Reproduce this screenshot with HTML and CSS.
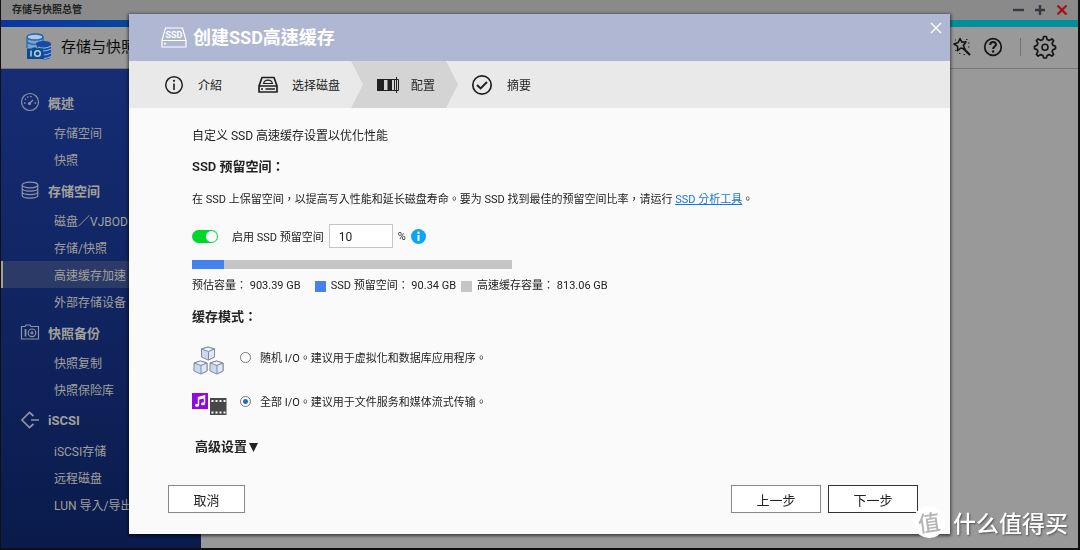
FILE: index.html
```html
<!DOCTYPE html>
<html lang="zh-TW">
<head>
<meta charset="utf-8">
<meta name="viewport" content="width=device-width, initial-scale=1">
<title>存储与快照总管</title>
<link rel="stylesheet" href="styles.css">
</head>
<body>
<div class="window">
  <div class="titlebar">
    <span class="titlebar-name">存储与快照总管</span>
    <div class="titlebar-buttons">
      <button type="button" aria-label="最小化"><svg width="12" height="12" viewBox="0 0 12 12"><path d="M1 6h11" stroke="#343a42" stroke-width="2.4"/></svg></button>
      <button type="button" aria-label="最大化"><svg width="12" height="12" viewBox="0 0 12 12"><path d="M1 6h10M6 1v10" stroke="#343a42" stroke-width="2.4"/></svg></button>
      <button type="button" aria-label="关闭"><svg width="12" height="12" viewBox="0 0 12 12"><path d="M1.500 1.500l9 9M10.500 1.500l-9 9" stroke="#a01218" stroke-width="2.2"/></svg></button>
    </div>
  </div>
  <div class="stripe"></div>
  <header class="app-header">
    <svg width="26" height="28" viewBox="0 0 26 28">
      <path d="M1 4v11c0 2 16 2 16 0V4" fill="#78a3cc"/>
      <ellipse cx="9" cy="4" rx="8" ry="3" fill="#b2cbe0" stroke="#1f66ae" stroke-width="1.3"/>
      <path d="M1 4v11M17 4v5M1 9c2 2 7 3 11 2" fill="none" stroke="#1f66ae" stroke-width="1.2"/>
      <path d="M10 11c0-4 15-4 15 0v12c0 3-5 4-9 3z" fill="#174aa5"/>
      <path d="M12 14c4 2 10 1 13-1M17 18c3 0 6-1 8-2M18 22c3 0 5-1 7-2M18 25.500c3 0 5-1 7-2" fill="none" stroke="#8cb0da" stroke-width="1.2"/>
      <path d="M1 15.500h5l1-1h3l1 1h6V26H1z" fill="#084c91"/>
      <circle cx="11.500" cy="20.500" r="2.800" fill="none" stroke="#bdcbd8" stroke-width="1.600"/><path d="M5 17.500v6" stroke="#bdcbd8" stroke-width="1.500"/>
    </svg>
    <h1 class="app-title">存储与快照总管</h1>
    <div class="app-tools">
      <button type="button" aria-label="向导"><svg width="20" height="20" viewBox="0 0 20 20"><path d="M8 1.500l2 3.800 4-.6-2.600 3.800 1.600 3.700-4.100-1.200-3.300 2.700V9.400L2 7l4.200-1.500z" fill="none" stroke="#151515" stroke-width="1.600" stroke-linejoin="round"/><path d="M11.500 11.500l6.500 6.500" stroke="#151515" stroke-width="2.200"/><path d="M14 2.500h1.500M16 6h1.500M16 10h1.500M3 13.500h1.500M7 16.500h1.500M11.500 17.500H13M3 3h1" stroke="#252525" stroke-width="1.2"/></svg></button>
      <button type="button" aria-label="帮助"><svg width="20" height="20" viewBox="0 0 20 20"><circle cx="10" cy="10" r="8.300" fill="none" stroke="#151515" stroke-width="1.700"/><path d="M7.200 8c0-4 5.800-3.800 5.800-.5 0 2-2.900 2.200-2.900 4.600" fill="none" stroke="#151515" stroke-width="2"/><circle cx="10.100" cy="14.500" r="1.200" fill="#151515"/></svg></button>
      <span class="divider"></span>
      <button type="button" aria-label="设置"><svg width="24" height="24" viewBox="0 0 24 24"><path d="M10.700 1.500h2.600l.8 3 2 .9 2.800-1.500 1.700 1.700-1.500 2.800.9 2 2.500.8v2.600l-2.500.8-.9 2 1.500 2.800-1.700 1.700-2.800-1.500-2 .9-.8 2.500h-2.600l-.8-2.500-2-.9-2.800 1.500-1.700-1.700 1.500-2.800-.9-2-2.500-.8v-2.600l2.500-.8.9-2-1.500-2.800 1.700-1.700 2.800 1.500 2-.9z" fill="none" stroke="#151515" stroke-width="1.700" stroke-linejoin="round"/><circle cx="12" cy="12.300" r="3" fill="none" stroke="#151515" stroke-width="1.600"/></svg></button>
    </div>
  </header>
  <div class="app-body">
    <nav class="sidebar">
      <a class="nav-head" href="#"><svg width="20" height="20" viewBox="0 0 20 20"><circle cx="10" cy="10" r="8.500"/><path d="M9 12l4-4"/><circle cx="9.500" cy="11.500" r="1"/><path d="M4 11h1.500M5 7l1 .6M7.500 4.500l.6 1M11 4v1.300M14.500 11H16" stroke-width="1.600"/></svg>概述</a>
      <a class="nav-item" href="#">存储空间</a>
      <a class="nav-item" href="#">快照</a>
      <a class="nav-head" href="#"><svg width="20" height="20" viewBox="0 0 20 20"><ellipse cx="10" cy="5" rx="7.800" ry="2.800"/><path d="M2.200 5v10.500c0 3.400 15.600 3.400 15.600 0V5M2.200 8.500c0 3.400 15.600 3.400 15.600 0M2.200 12c0 3.400 15.600 3.400 15.600 0"/></svg>存储空间</a>
      <a class="nav-item" href="#">磁盘／VJBOD</a>
      <a class="nav-item" href="#">存储/快照</a>
      <a class="nav-item nav-active" href="#">高速缓存加速</a>
      <a class="nav-item" href="#">外部存储设备</a>
      <a class="nav-head" href="#"><svg width="20" height="20" viewBox="0 0 20 20"><path d="M1.500 17V4.500h3.500l1-1.500h4l1 1.500h7.500V17z"/><circle cx="12" cy="10.800" r="3.800"/><circle cx="12" cy="10.800" r="1"/><path d="M5.500 7v7.500" stroke-width="1.700"/></svg>快照备份</a>
      <a class="nav-item" href="#">快照复制</a>
      <a class="nav-item" href="#">快照保险库</a>
      <a class="nav-head" href="#"><svg width="20" height="20" viewBox="0 0 20 20"><path d="M13.500 6L9.500 2.500 2 10l7.500 7.500 4-3.500M11 10h8" stroke-width="1.700"/></svg>iSCSI</a>
      <a class="nav-item" href="#">iSCSI存储</a>
      <a class="nav-item" href="#">远程磁盘</a>
      <a class="nav-item" href="#">LUN 导入/导出</a>
    </nav>
    <main class="workspace"></main>
  </div>
</div>

<div class="backdrop">
  <form class="dialog" role="dialog" aria-labelledby="dialog-title">
    <header class="dialog-head">
      <svg width="26" height="22" viewBox="0 0 26 22"><path d="M1 13.500L4.500 1h17L25 13.500V20H1zM1 13.500h24" fill="none" stroke="#fff" stroke-width="1.200"/><path d="M3 16.800h2" stroke="#fff" stroke-width="1.500"/><text x="13" y="10.500" text-anchor="middle" class="ssd-label">SSD</text></svg>
      <h2 id="dialog-title">创建SSD高速缓存</h2>
      <button type="button" class="dialog-close" aria-label="关闭"><svg width="12" height="12" viewBox="0 0 12 12"><path d="M1 1l10 10M11 1L1 11" stroke="#fff" stroke-width="1.400"/></svg></button>
    </header>
    <ol class="steps">
      <li class="step"><svg width="20" height="20" viewBox="0 0 20 20"><circle cx="10" cy="10" r="8.300" fill="none" stroke="#202020" stroke-width="1.500"/><path d="M10 8.500V15" stroke="#202020" stroke-width="1.600"/><circle cx="10" cy="5.800" r="1.100" fill="#202020"/></svg>介紹</li>
      <li class="step"><svg width="20" height="20" viewBox="0 0 20 20"><path d="M1 11L4 2.500h12L19 11v6H1zM1 11h18" fill="none" stroke="#202020" stroke-width="1.700" stroke-linejoin="round"/><path d="M5.500 8.500c1-4.500 8-4.500 9 0z" fill="none" stroke="#202020" stroke-width="1.100"/><path d="M3 14h2M7.500 14H17" stroke="#202020" stroke-width="1.300"/></svg>选择磁盘</li>
      <li class="step step-current" aria-current="step"><svg width="22" height="20" viewBox="0 0 22 20"><path d="M0 4h7v12H0zM10.500 4h4.500v12h-4.500z" fill="#202020"/><path d="M7 4.500h14.500v11H7M17.500 4v12M19.500 2v16" fill="none" stroke="#202020" stroke-width="1"/></svg>配置</li>
      <li class="step"><svg width="22" height="22" viewBox="0 0 22 22"><circle cx="11" cy="11" r="9.200" fill="none" stroke="#202020" stroke-width="1.700"/><path d="M6 11l3.600 3.400L16 8" fill="none" stroke="#202020" stroke-width="2"/></svg>摘要</li>
    </ol>
    <div class="content">
      <p class="intro">自定义 SSD 高速缓存设置以优化性能</p>
      <h3 class="section-title">SSD 预留空间：</h3>
      <p class="hint">在 SSD 上保留空间，以提高写入性能和延长磁盘寿命。要为 SSD 找到最佳的预留空间比率，请运行 <a href="#">SSD 分析工具</a>。</p>
      <div class="reserve">
        <input type="checkbox" class="toggle" id="reserve-on" checked>
        <label for="reserve-on">启用 SSD 预留空间</label>
        <input type="text" class="percent" id="percent" value="10" aria-label="预留空间百分比">
        <label class="unit" for="percent">%</label>
        <svg width="15" height="15" viewBox="0 0 15 15"><circle cx="7.500" cy="7.500" r="7.500" fill="#0aa5f7"/><path d="M7.500 6v6" stroke="#fff" stroke-width="2"/><circle cx="7.500" cy="3.700" r="1.200" fill="#fff"/></svg>
      </div>
      <div class="capacity"><div class="capacity-used" style="width: 10%"></div></div>
      <div class="legend">
        <span class="legend-total">预估容量： 903.39 GB</span>
        <span class="legend-part"><i class="swatch swatch-blue"></i>SSD 预留空间： 90.34 GB</span>
        <span class="legend-part"><i class="swatch"></i>高速缓存容量： 813.06 GB</span>
      </div>
      <h3 class="section-title">缓存模式：</h3>
      <div class="modes">
        <div class="mode">
          <svg width="36" height="30" viewBox="0 0 36 30" stroke="#858b9a" stroke-width="1" stroke-linejoin="round">
            <g id="cube"><path d="M16 1l6.500 2v8L16 14 9.500 11V3z" fill="#cbd6ef"/><path d="M16 1l6.500 2-6 2.500L9.500 3z" fill="#eef2fb"/><path d="M16.500 5.500V14l6-3V3z" fill="#dfe7f8"/></g>
            <use href="#cube" x="-7.500" y="14"/><use href="#cube" x="8.500" y="14"/>
          </svg>
          <label><input type="radio" name="mode">随机 I/O。建议用于虚拟化和数据库应用程序。</label>
        </div>
        <div class="mode">
          <svg width="36" height="30" viewBox="0 0 36 30">
            <path d="M0 3h16v16H0z" fill="#9408e0"/><path d="M6.500 15V7.500l6-1.500v7.500M6.500 9l6-1.500" fill="none" stroke="#fff" stroke-width="1.400"/><ellipse cx="5" cy="15.300" rx="2" ry="1.500" fill="#fff"/><ellipse cx="11" cy="13.800" rx="2" ry="1.500" fill="#fff"/>
            <path d="M18 8h16.500v17H18z" fill="#484848"/><path d="M19.500 11h14M19.500 22.500h14" stroke="#fff" stroke-width="2" stroke-dasharray="2 2"/>
          </svg>
          <label><input type="radio" name="mode" checked>全部 I/O。建议用于文件服务和媒体流式传输。</label>
        </div>
      </div>
      <button type="button" class="advanced">高级设置<svg width="9" height="9" viewBox="0 0 9 9"><path d="M0 0h9L4.500 9z" fill="#222"/></svg></button>
    </div>
    <footer class="dialog-foot">
      <button type="button" class="btn">取消</button>
      <button type="button" class="btn btn-wide btn-back">上一步</button>
      <button type="submit" class="btn btn-wide btn-next">下一步</button>
    </footer>
  </form>
</div>

<div class="watermark"><span class="watermark-badge">值</span>什么值得买</div>
</body>
</html>
```

FILE: styles.css
```css
* {
  box-sizing: border-box;
}

body {
  margin: 0;
  background: #101010;
  color: #222;
  font-family: Roboto, "Noto Sans CJK TC", "Noto Sans CJK SC", sans-serif;
  font-size: 12px;
}

h1, h2, h3, p, ol {
  margin: 0;
  padding: 0;
}

button, input {
  font: inherit;
  color: inherit;
}

button {
  padding: 0;
  border: 0;
  background: none;
}

svg {
  display: block;
  flex: none;
}

.window {
  display: flex;
  flex-direction: column;
  height: 100vh;
  padding: 0 2px 2px 1px;
  overflow: hidden;
}

.titlebar {
  display: flex;
  align-items: center;
  justify-content: space-between;
  height: 20px;
  padding: 0 10px 0 11px;
  background: #8a8a8a;
  flex: none;
}

.titlebar-name {
  font-size: 10px;
  font-weight: 700;
  line-height: 16px;
}

.titlebar-buttons {
  display: flex;
  gap: 10px;
}

.stripe {
  height: 7px;
  background: linear-gradient(90deg, #0935a0, #008e9c 60%, #00909a);
  flex: none;
}

.app-header {
  display: flex;
  align-items: center;
  height: 42px;
  padding: 0 21px 2px 25px;
  border-bottom: 1px solid #777;
  background: #999;
  flex: none;
}

.app-title {
  margin-left: 9px;
  font-size: 15px;
  font-weight: 400;
  line-height: 24px;
  color: #080808;
}

.app-tools {
  display: flex;
  align-items: center;
  gap: 11px;
  margin-left: auto;
}

.divider {
  width: 1px;
  height: 18px;
  margin: 0 1px 0 6px;
  background: #777066;
}

.app-body {
  display: flex;
  flex: 1;
  min-height: 0;
}

.sidebar {
  width: 200px;
  padding-top: 16px;
  background: linear-gradient(#162d75, #0a1b4b);
  flex: none;
}

.nav-head, .nav-item {
  display: flex;
  align-items: center;
  color: #a2a19b;
  text-decoration: none;
}

.nav-head {
  gap: 8px;
  height: 34px;
  padding-left: 19px;
  font-size: 13px;
  font-weight: 700;
}

.nav-head svg {
  fill: none;
  stroke: #8d93a3;
  stroke-width: 1.2;
}

.nav-item {
  height: 27px;
  padding-left: 53px;
}

.nav-active {
  padding-left: 51px;
  border-left: 2px solid #a2a19b;
  background: #2c3a68;
}

.workspace {
  flex: 1;
  background: #999;
}

.backdrop {
  position: fixed;
  inset: 0;
  display: flex;
  padding: 14px 130px 16px 129px;
}

.dialog {
  display: flex;
  flex-direction: column;
  flex: 1;
  background: #fafafa;
  box-shadow: 0 1px 3px 1px #0009;
}

.dialog-head {
  display: flex;
  align-items: center;
  gap: 6px;
  height: 47px;
  padding: 0 8px 0 32px;
  background: #b0b7d2;
  color: #fff;
}

.dialog-head h2 {
  font-size: 18px;
  font-weight: 700;
  line-height: 26px;
}

.ssd-label {
  fill: #fff;
  font-size: 9px;
  font-weight: 700;
}

.dialog-close {
  margin: 0 0 20px auto;
}

.steps {
  display: flex;
  height: 47px;
  padding-left: 35px;
  background: #e9e9e9;
  list-style: none;
}

.step {
  display: flex;
  align-items: center;
  gap: 14px;
  padding-right: 36px;
}

.step:nth-child(2) {
  padding-right: 11px;
}

.step-current {
  gap: 12px;
  width: 107px;
  padding: 0 0 0 26px;
  background: #d4d4d4;
  clip-path: polygon(0 0, 95px 0, 100% 50%, 95px 100%, 0 100%, 12px 50%);
}

.step:last-child {
  padding-left: 13px;
}

.content {
  padding: 20px 64px 0 63px;
}

.intro {
  line-height: 16px;
}

.section-title {
  margin-top: 13px;
  font-size: 13px;
  font-weight: 600;
  line-height: 20px;
}

.hint {
  margin-top: 15px;
  font-size: 11px;
  line-height: 16px;
}

.hint a {
  color: #1976d2;
  text-decoration: underline;
}

.reserve {
  display: flex;
  align-items: center;
  margin-top: 16px;
  font-size: 11px;
}

.toggle {
  appearance: none;
  display: flex;
  justify-content: flex-end;
  width: 26px;
  height: 13px;
  margin: 0 14px 0 0;
  padding: 1px;
  border-radius: 7px;
  background: #00d72c;
}

.toggle:not(:checked) {
  justify-content: flex-start;
  background: #bbb;
}

.toggle::before {
  content: "";
  width: 11px;
  height: 11px;
  border-radius: 50%;
  background: #fff;
}

.percent {
  width: 64px;
  height: 24px;
  margin: 0 5px;
  padding: 2px 9px 0;
  border: 1px solid #c4c4c4;
  background: #fff;
  font-size: 12px;
}

.unit {
  margin-right: 5px;
}

.capacity {
  width: 320px;
  max-width: 100%;
  height: 9px;
  margin-top: 12px;
  background: #c5c5c5;
}

.capacity-used {
  height: 100%;
  background: #4682ee;
}

.legend {
  display: flex;
  gap: 5px;
  margin-top: 9px;
  font-size: 11px;
  line-height: 16px;
}

.legend-total {
  margin-right: 9px;
}

.legend-part {
  display: flex;
  align-items: center;
  gap: 5px;
}

.swatch {
  width: 11px;
  height: 11px;
  background: #c5c5c5;
}

.swatch-blue {
  background: #4682ee;
}

.modes {
  display: grid;
  gap: 14px;
  margin-top: 19px;
}

.mode {
  display: flex;
  gap: 12px;
  font-size: 11px;
}

.mode label {
  display: flex;
  align-items: center;
  gap: 9px;
  height: 22px;
}

.mode input {
  appearance: none;
  width: 11px;
  height: 11px;
  margin: 0;
  border: 1px solid #777;
  border-radius: 50%;
  background: #fff;
}

.mode input:checked {
  background: radial-gradient(circle, #2468d8 0 2px, #fff 3px);
}

.advanced {
  display: flex;
  align-items: center;
  gap: 2px;
  margin: 17px 0 0 3px;
  font-size: 13px;
  font-weight: 600;
  line-height: 20px;
}

.dialog-foot {
  display: flex;
  gap: 7px;
  margin-top: auto;
  padding: 0 32px 21px 39px;
}

.btn {
  width: 77px;
  height: 28px;
  border: 1px solid #888;
  background: #fff;
  font-size: 13px;
}

.btn-wide {
  width: 90px;
}

.btn-back {
  margin-left: auto;
}

.btn-next {
  border-color: #333;
}

.watermark {
  position: fixed;
  right: 12px;
  bottom: 12px;
  display: flex;
  align-items: center;
  gap: 8px;
  color: #fff;
  font-size: 23px;
  font-weight: 500;
  line-height: 32px;
  font-family: "Noto Sans CJK SC", sans-serif;
  text-shadow: 1px 1px 2px #0007;
}

.watermark-badge {
  width: 32px;
  height: 32px;
  border-radius: 50%;
  background: #fff;
  color: #b5b5b5;
  font-size: 22px;
  line-height: 30px;
  text-align: center;
  text-shadow: none;
  transform: rotate(-8deg);
}
```
